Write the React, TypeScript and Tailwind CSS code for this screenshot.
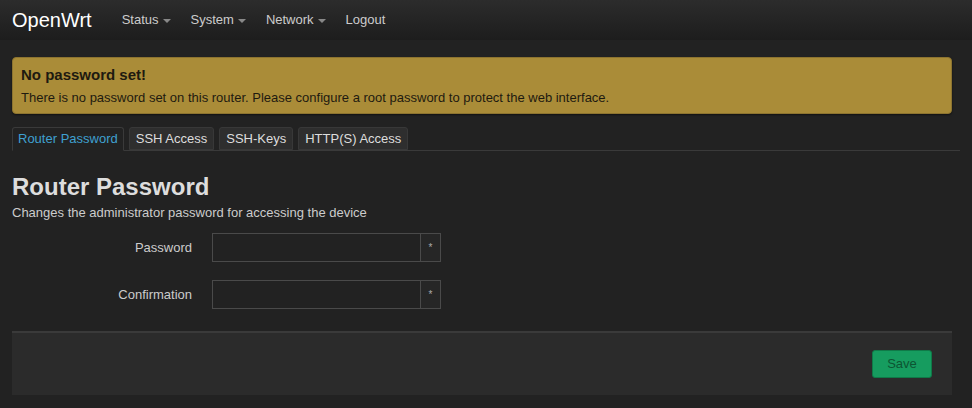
import React from "react";

function Caret() {
  return <span className="ml-1 inline-block h-0 w-0 border-x-[4px] border-t-[4px] border-x-transparent border-t-[#888] align-middle" />;
}

function Field({ label }: { label: string }) {
  return (
    <div className="flex items-center">
      <label className="w-[180px] text-right text-[13px] text-[#ccc]">{label}</label>
      <div className="ml-[20px] flex h-[29px] w-[229px] border border-[#4a4a4a] bg-[#222]">
        <input type="password" className="min-w-0 flex-1 bg-transparent px-2 text-[13px] text-[#ddd] outline-none" />
        <span className="flex w-[20px] items-center justify-center border-l border-[#4a4a4a] bg-[#262626] text-[10px] text-[#aaa]">*</span>
      </div>
    </div>
  );
}

export default function App() {
  const tabs = ["Router Password", "SSH Access", "SSH-Keys", "HTTP(S) Access"];
  return (
    <div className="min-h-[408px] bg-[#222] font-['Liberation_Sans',Arial,sans-serif] text-[#ccc]">
      <header className="flex h-[40px] items-center bg-gradient-to-b from-[#2c2c2c] to-[#1d1d1d] px-3">
        <span className="mr-[30px] text-[20px] text-white">OpenWrt</span>
        <nav className="flex gap-[20px] text-[13px] text-[#ccc]">
          <span>Status<Caret /></span>
          <span>System<Caret /></span>
          <span>Network<Caret /></span>
          <span>Logout</span>
        </nav>
      </header>

      <main className="pl-3 pr-[20px] pt-[17px]">
        <div className="rounded-[4px] border border-[#8d7430] bg-[#aa8c38] px-[8px] pb-[8px] pt-[8px] text-[#1e1a10] shadow-[0_1px_2px_rgba(0,0,0,0.5)]">
          <h4 className="text-[15px] font-bold leading-[18px]">No password set!</h4>
          <p className="mt-[6px] text-[13px] leading-[15px]">There is no password set on this router. Please configure a root password to protect the web interface.</p>
        </div>

        <ul className="mr-[-8px] mt-[13px] flex gap-[5px] border-b border-[#3a3a3a]">
          {tabs.map((t, i) => (
            <li
              key={t}
              className={
                i === 0
                  ? "mb-[-1px] rounded-t-[3px] border border-b-[#222] border-[#3a3a3a] bg-[#222] px-[5px] pb-[2px] pt-[2px] text-[13px] leading-[17px] text-[#3fa0d0]"
                  : "rounded-t-[3px] border border-[#383838] bg-[#2e2e2e] px-[6px] pb-[2px] pt-[2px] text-[13px] leading-[17px] text-[#ddd]"
              }
            >
              {t}
            </li>
          ))}
        </ul>

        <h2 className="mt-[22px] text-[24px] font-bold leading-[28px] text-[#ddd]">Router Password</h2>
        <p className="mt-[4px] text-[13px] leading-[16px] text-[#ccc]">Changes the administrator password for accessing the device</p>

        <div className="mt-[12px] flex flex-col gap-[18px]">
          <Field label="Password" />
          <Field label="Confirmation" />
        </div>

        <div className="mt-[22px] flex h-[64px] items-center justify-end border-t-2 border-[#3a3a3a] bg-[#2b2b2b] pr-[20px]">
          <button className="h-[28px] w-[60px] rounded-[3px] border border-[#0f7a48] bg-[#169c5f] text-[13px] text-[#0c5533]">Save</button>
        </div>
      </main>
    </div>
  );
}
